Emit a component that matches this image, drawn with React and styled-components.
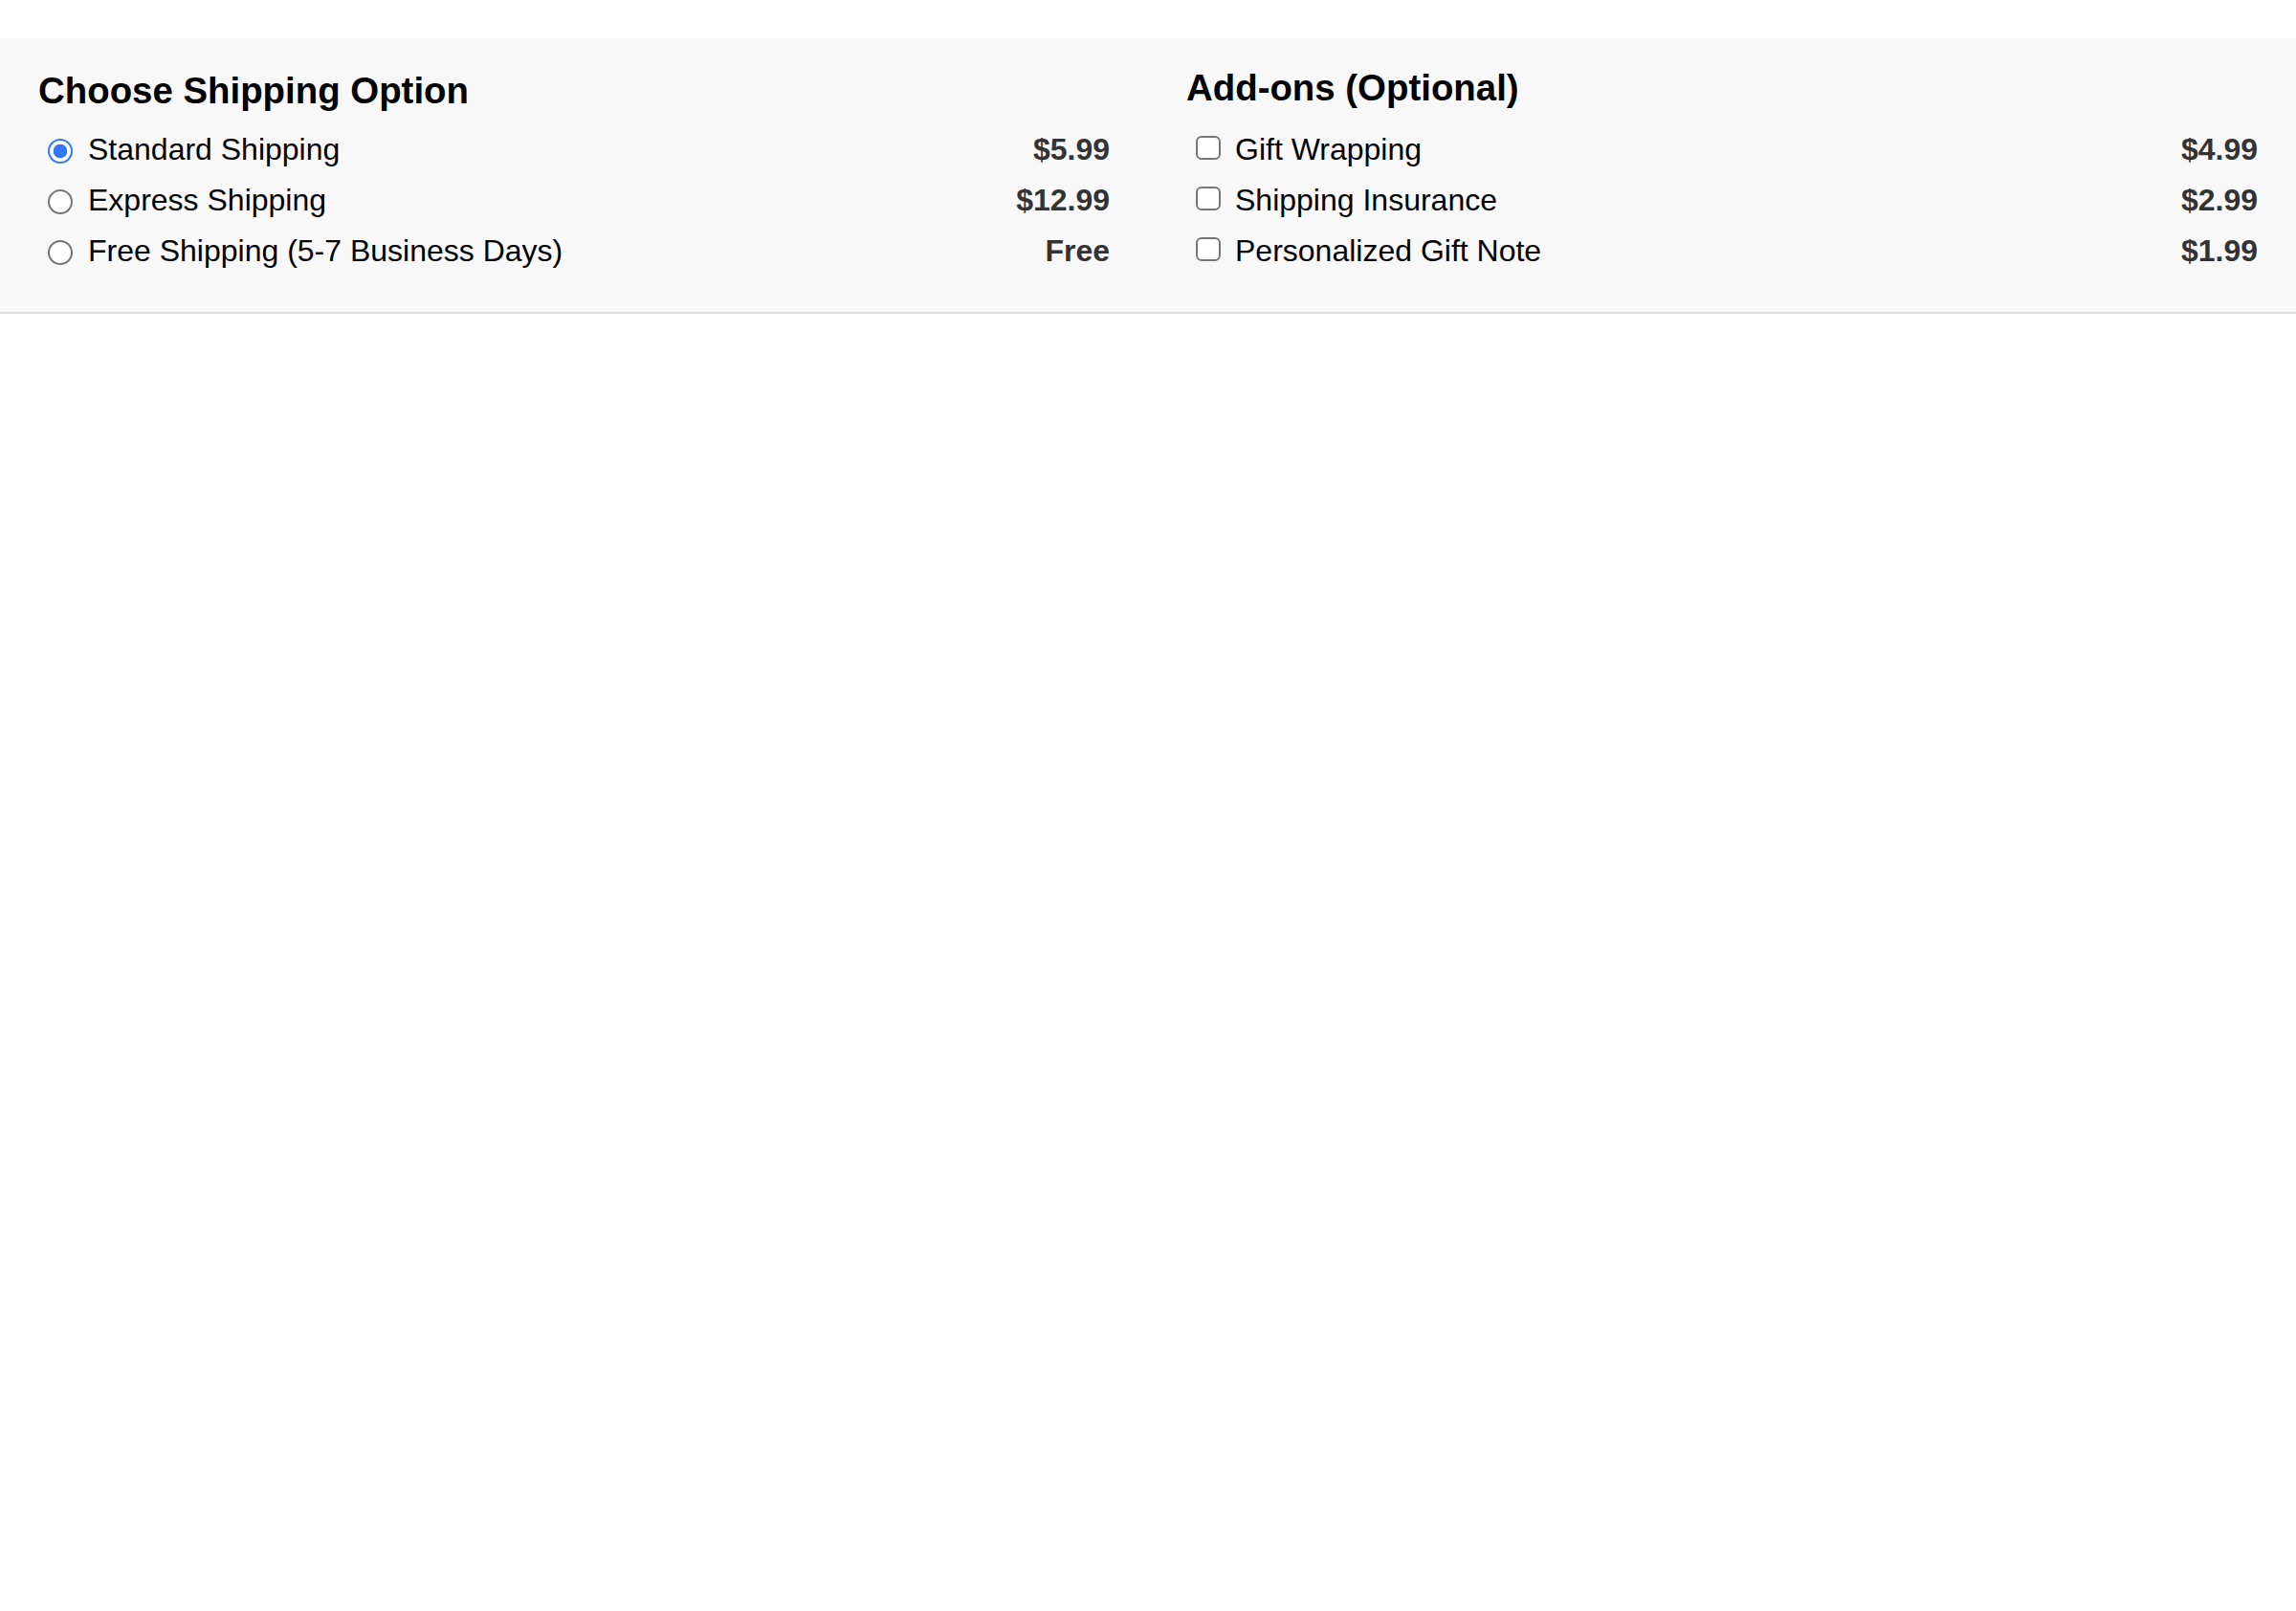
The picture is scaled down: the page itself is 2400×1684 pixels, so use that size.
import React, { useState } from 'react'
import styled, { createGlobalStyle } from 'styled-components'

const GlobalStyle = createGlobalStyle`
  html, body {
    margin: 0;
    padding: 0;
    background: #fff;
  }
  body {
    font-family: "Liberation Sans", Arial, Helvetica, sans-serif;
    color: #000;
  }
`

const Page = styled.div`
  min-height: 1684px;
  padding-top: 40px;
  box-sizing: border-box;
`

const Panel = styled.section`
  display: grid;
  grid-template-columns: 1fr 1fr;
  column-gap: 80px;
  padding: 33px 40px 37px;
  background: #f8f8f8;
  border-bottom: 2px solid #dddddd;
`

const Column = styled.div`
  display: flex;
  flex-direction: column;
`

// the add-ons title sits a touch higher than the shipping one
const Heading = styled.h3`
  margin: ${p => (p.$raised ? '-3px 0 16px' : '0 0 13px')};
  font-size: 38.4px;
  line-height: 44px;
  font-weight: bold;
  color: #000;
`

const Row = styled.label`
  display: flex;
  align-items: center;
  padding: 8px 0;
  font-size: 32px;
  line-height: 37px;
  color: #000;
  cursor: pointer;
`

const Radio = styled.input.attrs({ type: 'radio' })`
  appearance: none;
  box-sizing: border-box;
  width: 26px;
  height: 26px;
  margin: 3px 16px 0 10px;
  border: 2px solid #767676;
  border-radius: 50%;
  background: #fff;
  flex-shrink: 0;

  &:checked {
    border: 2.5px solid #3478f6;
    background: radial-gradient(circle, #3478f6 0 7px, #fff 7.6px);
  }
`

const Checkbox = styled.input.attrs({ type: 'checkbox' })`
  appearance: none;
  box-sizing: border-box;
  width: 26px;
  height: 25px;
  margin: 0 15px 5px 10px;
  border: 2px solid #767676;
  border-radius: 6px;
  background: #fff;
  flex-shrink: 0;

  &:checked {
    border-color: #3478f6;
    background: #3478f6;
  }
`

const Name = styled.span`
  flex: 1;
`

const Price = styled.span`
  margin-left: auto;
  font-weight: bold;
  color: #333;
`

const shippingOptions = [
  { id: 'standard', name: 'Standard Shipping', price: '$5.99' },
  { id: 'express', name: 'Express Shipping', price: '$12.99' },
  { id: 'free', name: 'Free Shipping (5-7 Business Days)', price: 'Free' }
]

const addOns = [
  { id: 'wrap', name: 'Gift Wrapping', price: '$4.99' },
  { id: 'insurance', name: 'Shipping Insurance', price: '$2.99' },
  { id: 'note', name: 'Personalized Gift Note', price: '$1.99' }
]

export default function App() {
  const [shipping, setShipping] = useState('standard')
  const [extras, setExtras] = useState({})

  const toggle = id => setExtras(prev => ({ ...prev, [id]: !prev[id] }))

  return (
    <Page>
      <GlobalStyle />
      <Panel>
        <Column>
          <Heading>Choose Shipping Option</Heading>
          {shippingOptions.map(opt => (
            <Row key={opt.id}>
              <Radio
                name="shipping"
                value={opt.id}
                checked={shipping === opt.id}
                onChange={() => setShipping(opt.id)}
              />
              <Name>{opt.name}</Name>
              <Price>{opt.price}</Price>
            </Row>
          ))}
        </Column>
        <Column>
          <Heading $raised>Add-ons (Optional)</Heading>
          {addOns.map(item => (
            <Row key={item.id}>
              <Checkbox
                checked={!!extras[item.id]}
                onChange={() => toggle(item.id)}
              />
              <Name>{item.name}</Name>
              <Price>{item.price}</Price>
            </Row>
          ))}
        </Column>
      </Panel>
    </Page>
  )
}
